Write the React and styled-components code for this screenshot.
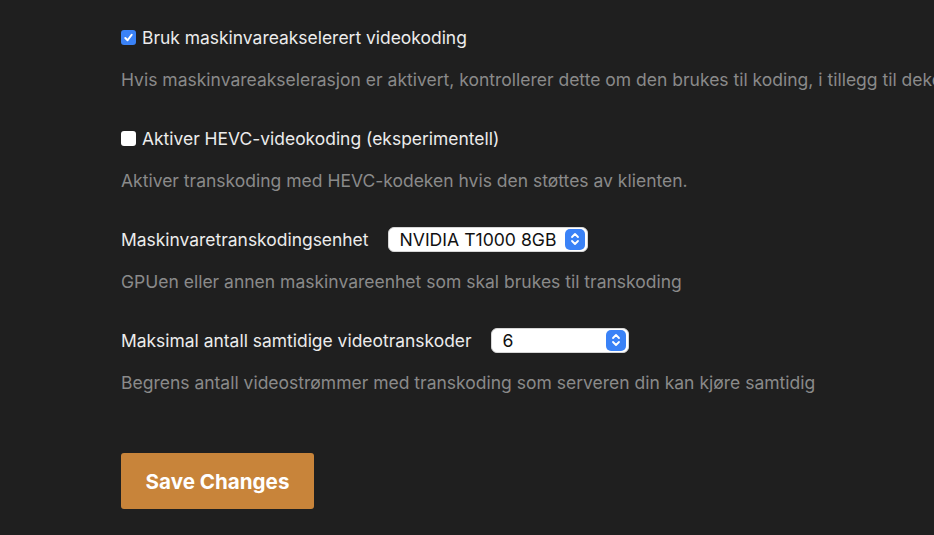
import React from "react"
import styled, { createGlobalStyle } from "styled-components"

const Global = createGlobalStyle`
  html, body {
    margin: 0;
    padding: 0;
    background: #1f1f1f;
    font-family: Inter, "Liberation Sans", Arial, sans-serif;
  }
`

const Stepper = () => (
  <StepBox>
    <svg width="10" height="16" viewBox="0 0 10 16" fill="none" stroke="#fff" strokeWidth="1.8" strokeLinecap="round" strokeLinejoin="round">
      <path d="M2 6 L5 3 L8 6" />
      <path d="M2 10 L5 13 L8 10" />
    </svg>
  </StepBox>
)

const Check = ({ checked }) => (
  <Box checked={checked}>
    {checked && (
      <svg width="11" height="11" viewBox="0 0 12 12" fill="none" stroke="#fff" strokeWidth="2.2" strokeLinecap="round" strokeLinejoin="round">
        <path d="M2.5 6.5 L5 9 L9.5 3" />
      </svg>
    )}
  </Box>
)

const App = () => (
  <Page>
    <Global />
    <Setting>
      <Row>
        <Check checked />
        <Label>Bruk maskinvareakselerert videokoding</Label>
      </Row>
      <Help>
        Hvis maskinvareakselerasjon er aktivert, kontrollerer dette om den brukes til koding, i tillegg til dekoding.
      </Help>
    </Setting>
    <Setting>
      <Row>
        <Check />
        <Label>Aktiver HEVC-videokoding (eksperimentell)</Label>
      </Row>
      <Help>Aktiver transkoding med HEVC-kodeken hvis den støttes av klienten.</Help>
    </Setting>
    <Setting>
      <Row>
        <Label wide>Maskinvaretranskodingsenhet</Label>
        <Select width={200}>
          <span>NVIDIA T1000 8GB</span>
          <Stepper />
        </Select>
      </Row>
      <Help>GPUen eller annen maskinvareenhet som skal brukes til transkoding</Help>
    </Setting>
    <Setting>
      <Row>
        <Label wide>Maksimal antall samtidige videotranskoder</Label>
        <Select width={138}>
          <span>6</span>
          <Stepper />
        </Select>
      </Row>
      <Help>Begrens antall videostrømmer med transkoding som serveren din kan kjøre samtidig</Help>
    </Setting>
    <SaveButton>Save Changes</SaveButton>
  </Page>
)

export default App

const Page = styled.div`
  width: 934px;
  height: 535px;
  overflow: hidden;
  box-sizing: border-box;
  padding: 24px 0 0 121px;
  background: #1f1f1f;
`
const Setting = styled.div`
  display: flex;
  flex-direction: column;
  gap: 17px;
  margin-bottom: 32px;
`
const Row = styled.div`
  display: flex;
  align-items: center;
  height: 26px;
  white-space: nowrap;
`
const Box = styled.span`
  width: 15px;
  height: 15px;
  border-radius: 3px;
  box-sizing: border-box;
  background: ${p => (p.checked ? "#3a82f7" : "#ffffff")};
  display: inline-flex;
  align-items: center;
  justify-content: center;
  margin-right: 6px;
  flex-shrink: 0;
`
const Label = styled.span`
  color: #ececec;
  font-size: 17.45px;
  margin-right: ${p => (p.wide ? "19px" : "0")};
`
const Help = styled.div`
  color: #8a8a8a;
  font-size: 17.5px;
  white-space: nowrap;
  line-height: 26px;
`
const Select = styled.div`
  width: ${p => p.width}px;
  height: 25px;
  box-sizing: border-box;
  background: #ffffff;
  border-radius: 6px;
  border: 1px solid #d6d6d6;
  display: flex;
  align-items: center;
  justify-content: space-between;
  padding: 0 2px 0 11px;
  color: #111;
  font-size: 17.6px;
`
const StepBox = styled.span`
  width: 20px;
  height: 21px;
  border-radius: 5px;
  background: #3a82f7;
  display: inline-flex;
  align-items: center;
  justify-content: center;
`
const SaveButton = styled.button`
  margin-top: 25px;
  width: 193px;
  height: 56px;
  border: none;
  border-radius: 3px;
  background: #c8843a;
  color: #ffffff;
  font-family: Inter, sans-serif;
  font-weight: 700;
  font-size: 20.6px;
  cursor: pointer;
`
